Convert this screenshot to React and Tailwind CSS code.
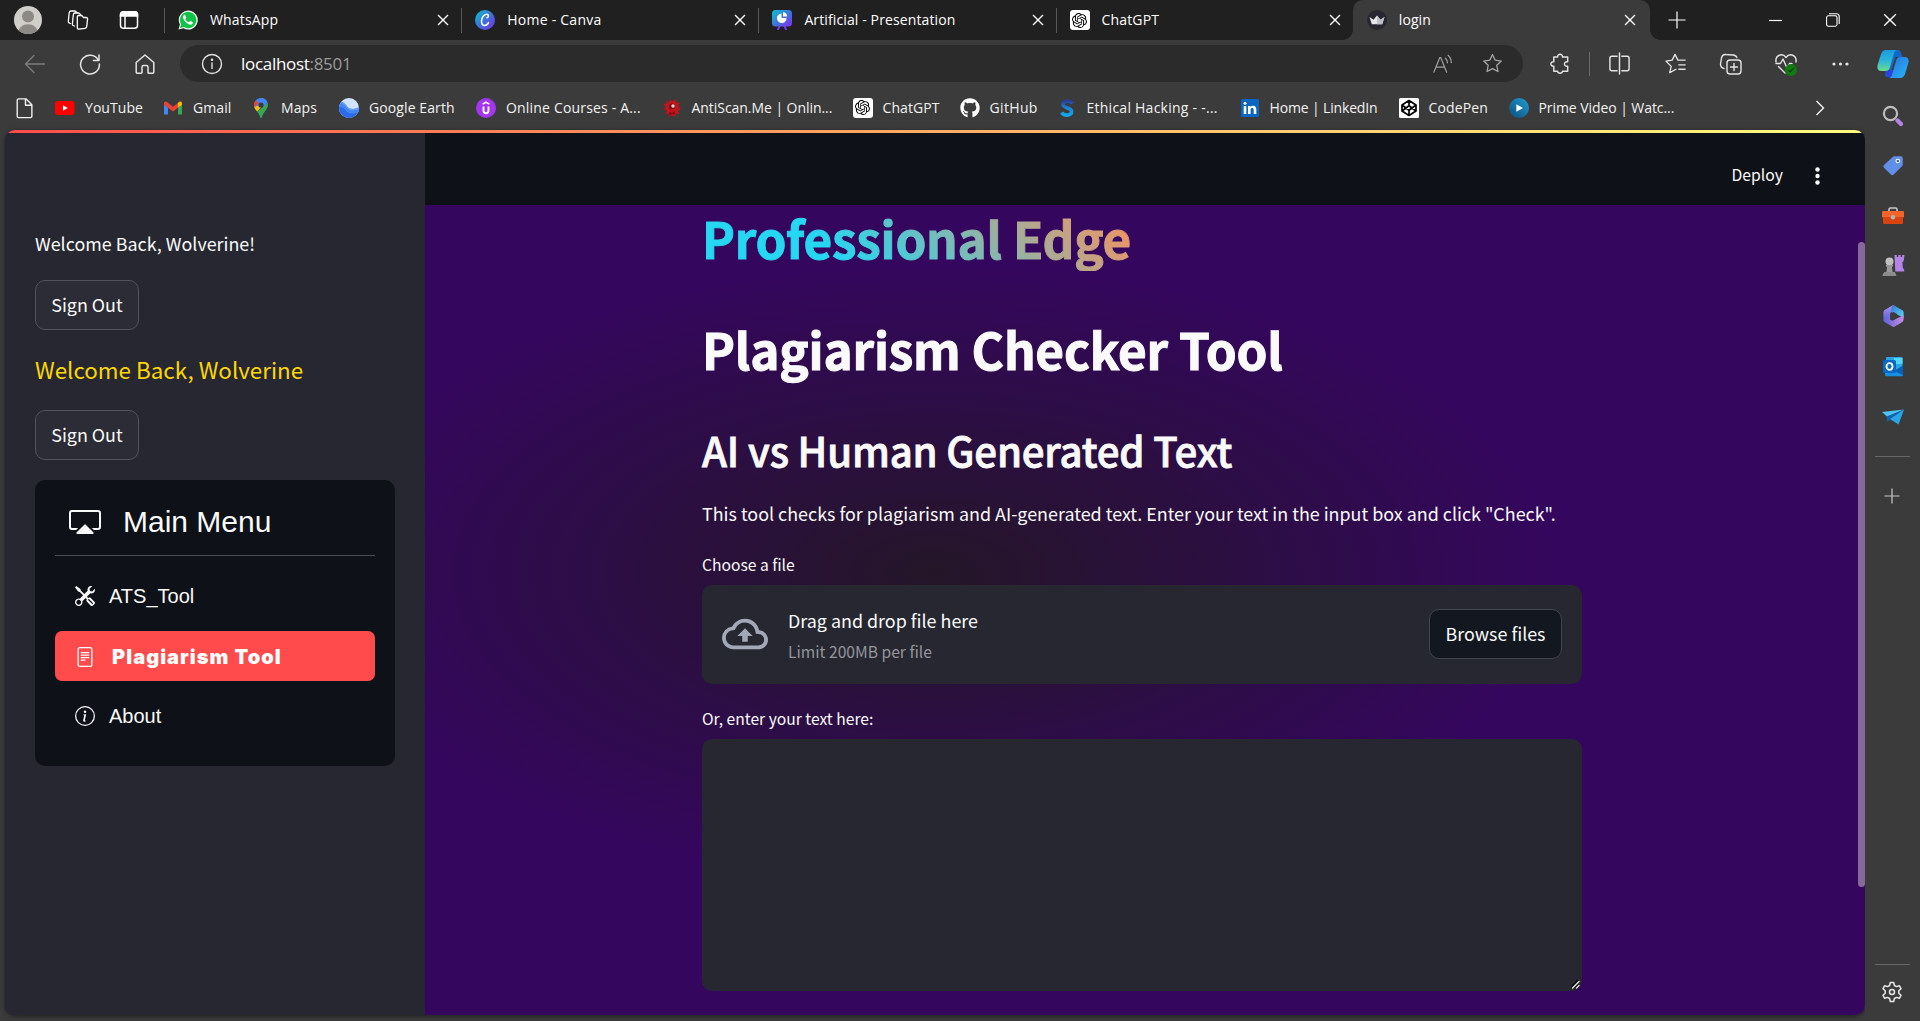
import React from "react";
import { BsCast, BsTools, BsFileText, BsInfoCircle } from "react-icons/bs";
import { FaGithub } from "react-icons/fa";
import { SiOpenai } from "react-icons/si";
import { MdOutlineCloudUpload } from "react-icons/md";

/* ---------- small line icons of the browser chrome ---------- */

const Line = ({ size = 24, w = 1.3, className = "", children }) => (
  <svg width={size} height={size} viewBox="0 0 24 24" fill="none" stroke="currentColor" strokeWidth={w} strokeLinecap="round" strokeLinejoin="round" className={`shrink-0 ${className}`}>
    {children}
  </svg>
);

const CloseX = ({ size = 12, w = 1.4 }) => (
  <svg width={size} height={size} viewBox="0 0 12 12" stroke="currentColor" strokeWidth={w} className="shrink-0">
    <path d="M1 1L11 11M11 1L1 11" />
  </svg>
);

const Star = ({ size = 24 }) => (
  <Line size={size}>
    <path d="M12 2.6l2.8 6 6.4.8-4.7 4.5 1.2 6.5-5.7-3.1-5.7 3.1 1.2-6.5L2.8 9.4l6.4-.8z" />
  </Line>
);

/* ---------- favicons ---------- */

const WhatsApp = () => (
  <svg width="20" height="20" viewBox="0 0 20 20">
    <path d="M.5 19.6l1.4-5A9.5 9.5 0 1 1 5.500 18.300z" fill="#f3fdf5" />
    <path d="M2 18.100l1.100-3.900A8.200 8.200 0 1 1 6 17.100z" fill="#10c245" />
    <path d="M7.300 5.300c-.3-.5-.6-.5-1-.4C5.300 5.500 5 6.400 5.100 7.500c.4 2.900 3.500 6.200 6.700 7.100 1.300.4 2.600-.2 3-1.400.2-.8.1-.9-.4-1.200l-1.800-.9c-.4-.2-.6-.1-.9.3-.7.9-.8 1-1.300.7C8.700 11.400 7.700 10 7.300 9.200c-.2-.4.9-1 .9-1.700z" fill="#fff" />
  </svg>
);

const Canva = () => (
  <svg width="20" height="20" viewBox="0 0 20 20">
    <defs>
      <linearGradient id="cv" x1="0" y1="0" x2="1" y2="1">
        <stop offset="0" stopColor="#08c7cf" />
        <stop offset="0.5" stopColor="#3b72d9" />
        <stop offset="1" stopColor="#7d2ae8" />
      </linearGradient>
    </defs>
    <circle cx="10" cy="10" r="10" fill="url(#cv)" />
    <path d="M12 7.800c1.900-.4 1.900-3.600-.3-3.600-2.800 0-5.200 3.700-5.200 7 0 2.600 1.300 4.200 3.100 4.200 1.700 0 3-1.100 3.900-2.800" fill="none" stroke="#fff" strokeWidth="1.500" strokeLinecap="round" />
  </svg>
);

const CanvaPresentation = () => (
  <svg width="20" height="20" viewBox="0 0 20 20">
    <defs>
      <linearGradient id="cp" x1="0" y1="0" x2="1" y2="1">
        <stop offset="0" stopColor="#08c7cf" />
        <stop offset="0.5" stopColor="#3a78dd" />
        <stop offset="1" stopColor="#8a2af0" />
      </linearGradient>
    </defs>
    <path d="M7.500 16L6 19.500M12.500 16L14 19.500" stroke="#6f3be6" strokeWidth="2" strokeLinecap="round" />
    <rect x="0" y="0" width="20" height="16.500" rx="3.500" fill="url(#cp)" />
    <path d="M9.500 3.500V8h5a4.800 4.800 0 1 1-5-4.500z" fill="#fff" />
    <path d="M11 2.200a4.600 4.600 0 0 1 4.300 4.300H11z" fill="#fff" />
  </svg>
);

const ChatGpt = () => (
  <span className="flex size-5 items-center justify-center rounded-[3px] bg-white text-black">
    <SiOpenai size={15} />
  </span>
);

const Crown = () => (
  <svg width="20" height="20" viewBox="0 0 20 20">
    <circle cx="10" cy="10" r="10" fill="#262730" />
    <path d="M2.500 7l4 2.800L10 5.500l3.500 4.300 4-2.800-2.300 7.300H4.800z" fill="#e6e6ea" />
    <path d="M10 5.500l3.500 4.300 4-2.800-2.300 7.300H10z" fill="#bfc0c6" />
  </svg>
);

const YouTube = () => (
  <svg width="20" height="20" viewBox="0 0 20 20">
    <rect y="3" width="19.500" height="14" rx="3.200" fill="#f00" />
    <path d="M8 7.200v5.600l4.800-2.800z" fill="#fff" />
  </svg>
);

const Gmail = () => (
  <svg width="20" height="20" viewBox="0 0 20 20">
    <path d="M1 5.500V16.500h4V9.800z" fill="#4285f4" />
    <path d="M19 5.500V16.500h-4V9.800z" fill="#34a853" />
    <path d="M1 6.800V5.500C1 3.900 2.500 3 3.800 3.900L10 8.700l6.200-4.800L15 9.800l-5 3.800-5-3.800z" fill="#ea4335" />
    <path d="M15 4.800l1.200-.9C17.500 3 19 3.900 19 5.500v1.300L15 9.800z" fill="#fbbc04" />
  </svg>
);

const Maps = () => (
  <svg width="20" height="20" viewBox="0 0 20 20">
    <path d="M10 0a7 7 0 0 0-7 7c0 2.200.9 3.800 2 5.200L14.500 1.700A7 7 0 0 0 10 0z" fill="#4285f4" />
    <path d="M4.700 2.500A7 7 0 0 0 3 7c0 .8.100 1.500.3 2.100L8 5z" fill="#ea4335" />
    <path d="M3.300 9C4 11 5.200 12.300 6.300 13.700L13 5.500z" fill="#fbbc04" />
    <path d="M16.500 4.300C18 8.500 15.500 11.500 13 14.700c-1.500 2-1.800 3.600-2.400 5-.3.500-.9.500-1.200 0-.6-1.600-1.200-3.500-3.100-6z" fill="#34a853" />
    <path d="M10 0a7 7 0 0 1 6.500 4.300L12 9.500 8 5z" fill="#4285f4" />
    <circle cx="10" cy="7" r="2.600" fill="#3b3b3b" />
  </svg>
);

const Earth = () => (
  <svg width="20" height="20" viewBox="0 0 20 20">
    <defs>
      <clipPath id="ec"><circle cx="10" cy="10" r="10" /></clipPath>
    </defs>
    <g clipPath="url(#ec)">
      <rect width="20" height="20" fill="#d2e3fc" />
      <path d="M0 4c4-1 6 1 8 4s6 4 12 1v11H0z" fill="#669df6" />
      <path d="M0 9c3-1 5 1 7 3.500s7 4 13 1.500v6H0z" fill="#2b6de8" />
      <path d="M0 6c3-1.500 5.500.5 7.500 3.500S14 13.500 20 11v3c-6 2-10 1-13-2S3 8 0 9z" fill="#4285f4" />
    </g>
  </svg>
);

const Udemy = () => (
  <svg width="20" height="20" viewBox="0 0 20 20">
    <circle cx="10" cy="10" r="10" fill="#a435f0" />
    <path d="M6.600 6.100L10 4.200l3.400 1.900" fill="none" stroke="#fff" strokeWidth="1.600" />
    <path d="M7.500 8.400v4.200c0 3.600 5 3.600 5 0V8.400" fill="none" stroke="#fff" strokeWidth="1.900" />
  </svg>
);

const AntiScan = () => (
  <svg width="20" height="20" viewBox="0 0 20 20">
    <path d="M4 3l3 1.500L8 1.500l2.500 2L13.500 1l.7 3.300 3.600.7-1.500 3.300 2.500 2-2.700 2.400 1.200 3.300-3.300-.3-.5 3.300L10 17l-3.500 2.500.3-4-3.500.5 1.700-3.500L1.500 11l2.600-2L1.500 6 4.500 6z" fill="#c3141b" />
    <path d="M7 14l3 1 3-2-.5 4-2.500-1.500L7.500 18z" fill="#7d0d12" />
    <circle cx="10" cy="8.500" r="3" fill="#7a1216" />
    <circle cx="11" cy="8" r="1.700" fill="#e9d6d6" />
  </svg>
);

const Sololearn = () => (
  <svg width="20" height="20" viewBox="0 0 20 20">
    <defs>
      <linearGradient id="sl" x1="0" y1="0" x2="0" y2="1">
        <stop offset="0" stopColor="#2b3fa0" />
        <stop offset="0.500" stopColor="#1789d4" />
        <stop offset="1" stopColor="#10a8e8" />
      </linearGradient>
    </defs>
    <path d="M15.500 5.600C13.500 2.500 6.200 2.300 6 6.400c-.1 4 8.600 2.800 8.600 7.200 0 4.600-7.800 4.400-10 1" fill="none" stroke="url(#sl)" strokeWidth="3.600" />
  </svg>
);

const LinkedIn = () => (
  <svg width="20" height="20" viewBox="0 0 20 20">
    <rect x="1" y="1" width="18" height="18" rx="1.500" fill="#0a66c2" />
    <path d="M3.700 8h2.600v8H3.700zM8 8h2.500v1.100c1.200-2 5.800-2 5.800 2.200V16h-2.600v-4.100c0-2.500-3.100-2.300-3.100 0V16H8z" fill="#fff" />
    <circle cx="5" cy="5.300" r="1.500" fill="#fff" />
  </svg>
);

const CodePen = () => (
  <svg width="20" height="20" viewBox="0 0 20 20">
    <rect width="20" height="20" rx="1.500" fill="#fff" />
    <path d="M10 2.500l7 4.500v6l-7 4.500L3 13V7zM10 2.500V7.500M10 12.500v5M3 7l7 5.200L17 7M3 13l7-5.200 7 5.200" fill="none" stroke="#000" strokeWidth="1.700" strokeLinejoin="round" />
  </svg>
);

const PrimeVideo = () => (
  <svg width="20" height="20" viewBox="0 0 20 20">
    <defs>
      <linearGradient id="pv" x1="0" y1="1" x2="1" y2="0">
        <stop offset="0" stopColor="#0e4a7c" />
        <stop offset="1" stopColor="#1fa0d4" />
      </linearGradient>
    </defs>
    <circle cx="10" cy="10" r="10" fill="url(#pv)" />
    <path d="M7.400 6.200v7.600L14 10z" fill="#fff" />
  </svg>
);

/* ---------- tab strip ---------- */

const tabs = [
  { label: "WhatsApp", icon: <WhatsApp />, track: "tracking-[0.15px]" },
  { label: "Home - Canva", icon: <Canva />, track: "tracking-[0.25px]" },
  { label: "Artificial - Presentation", icon: <CanvaPresentation />, track: "tracking-[0.12px]" },
  { label: "ChatGPT", icon: <ChatGpt />, track: "tracking-[0.15px]" },
  { label: "login", icon: <Crown />, track: "tracking-[0.1px]", active: true },
];

const Tab = ({ label, icon, active, track }) => (
  <div className={`relative flex h-10 w-[297.200px] shrink-0 items-center pl-[14px] ${active ? "rounded-t-[10px] bg-[#3b3b3b] pr-[14px]" : "pr-3"}`}>
    {!active && <span className="absolute left-0 top-2 h-[25px] w-px bg-[#5a5a5a]" />}
    {active && (
      <>
        <span className="absolute -left-[10px] bottom-0 size-[10px] bg-[radial-gradient(circle_at_0_0,#202020_9.500px,#3b3b3b_10px)]" />
        <span className="absolute -right-[10px] bottom-0 size-[10px] bg-[radial-gradient(circle_at_100%_0,#202020_9.500px,#3b3b3b_10px)]" />
      </>
    )}
    {icon}
    <span className={`ml-3 grow whitespace-nowrap text-[14px] leading-5 ${track}`}>{label}</span>
    <CloseX />
  </div>
);

const TabStrip = () => (
  <div className="flex h-10 items-center bg-[#202020] text-white">
    <div className="flex h-10 w-[164px] shrink-0 items-center">
      <svg width="28" height="28" viewBox="0 0 28 28" className="ml-[14px]">
        <defs><clipPath id="av"><circle cx="14" cy="14" r="14" /></clipPath></defs>
        <g clipPath="url(#av)">
          <rect width="28" height="28" fill="#d0cec9" />
          <circle cx="14" cy="10.500" r="6" fill="#8d8a86" />
          <path d="M4 28c0-13 20-13 20 0z" fill="#8d8a86" />
        </g>
      </svg>
      <Line size={24} w={1.300} className="ml-6">
        <path d="M12.500 7.500h3.200l1.800 2h2.700c.9 0 1.500.7 1.400 1.500l-.9 7.700c-.1.900-.8 1.600-1.700 1.700l-6 .8c-1 .1-1.700-.6-1.700-1.600V9c0-.8.5-1.500 1.200-1.500z" />
        <path d="M8.500 18l-1-.3c-.8-.2-1.200-.9-1.100-1.700l.9-9.300c.1-1 .8-1.700 1.800-1.700h3.700l2 1.700M4.500 15.500l-1-.4c-.9-.3-1.300-1-1.200-1.900L3.200 4.700c.1-1 .9-1.700 1.900-1.700h4l1.700 1.500" />
      </Line>
      <svg width="20" height="20" viewBox="0 0 20 20" className="ml-[29px]" fill="none" stroke="#fff" strokeWidth="1.500">
        <rect x="1.500" y="1.800" width="17" height="16.400" rx="3" />
        <path d="M1.500 6V4.500a2.700 2.700 0 0 1 2.700-2.700h11.600a2.700 2.700 0 0 1 2.700 2.700V6z" fill="#fff" />
        <path d="M6 6v12" />
      </svg>
    </div>
    {tabs.map((t) => <Tab key={t.label} {...t} />)}
    <div className="flex grow items-center pl-[18px]">
      <svg width="18" height="18" viewBox="0 0 18 18" stroke="#fff" strokeWidth="1.200"><path d="M9 0.500v17M.5 9h17" /></svg>
      <svg width="13" height="13" viewBox="0 0 13 13" stroke="#fff" strokeWidth="1.200" className="ml-[83px]"><path d="M0 6.500h13" /></svg>
      <svg width="14" height="14" viewBox="0 0 14 14" fill="none" stroke="#fff" strokeWidth="1.100" className="ml-[44px]">
        <rect x=".6" y="2.800" width="10.400" height="10.400" rx="1.600" />
        <path d="M3 .7h7.500a2.700 2.700 0 0 1 2.700 2.700V11" />
      </svg>
      <span className="ml-[43px]"><CloseX size={14} w={1.200} /></span>
    </div>
  </div>
);

/* ---------- address bar ---------- */

const Copilot = () => (
  <svg width="32" height="28" viewBox="0 0 32 28">
    <defs>
      <linearGradient id="k1" x1="0" y1="0" x2="0" y2="1">
        <stop offset="0" stopColor="#1a9be0" /><stop offset="0.500" stopColor="#2cb5d8" /><stop offset="1" stopColor="#6ddc8b" />
      </linearGradient>
      <linearGradient id="k2" x1="0" y1="0" x2="1" y2="1">
        <stop offset="0" stopColor="#2a6fe0" /><stop offset="1" stopColor="#25b8f5" />
      </linearGradient>
    </defs>
    <path d="M13 0h8c2 0 2.500 1.500 3 3l1.500 4h-7L13 24c-1.500 4-3 4-5 1z" fill="#1268c8" />
    <path d="M9 20h8l-2.500 7.500h-2c-2 0-2.500-1-3-3z" fill="#2a41dd" />
    <path d="M9 0h11c-2 .5-2.600 2-3.200 4L13 17c-.7 2.500-2 4-4.500 4H4.500C1 21-.2 18.500.6 15L4 4C5 1.500 6.500 0 9 0z" fill="url(#k1)" />
    <path d="M23 28H12c2-.5 2.600-2 3.200-4L19 11c.7-2.500 2-4 4.500-4h4c3.500 0 4.700 2.500 3.900 6L28 24c-1 2.500-2.500 4-5 4z" fill="url(#k2)" />
  </svg>
);

const Cell = ({ className, children }) => <div className={`flex shrink-0 items-center justify-center ${className}`}>{children}</div>;

const AddressRow = () => (
  <div className="flex h-[47px] items-center bg-[#3b3b3b] text-[#e4e4e4]">
    <div className="flex w-[180px] shrink-0 items-center pl-[7px]">
      <Cell className="w-[55px] text-[#7d7d7d]"><Line size={24}><path d="M21.500 12H2.500M11 3.500L2.500 12l8.500 8.500" /></Line></Cell>
      <Cell className="w-[55px]"><Line size={24} w={1.500}><path d="M20.500 8.500A9.400 9.400 0 1 0 21.400 12M21 3v5.500h-5.500" /></Line></Cell>
      <Cell className="w-[55px]"><Line size={24} w={1.500}><path d="M3.200 10.500L12 3l8.800 7.500V20a1.200 1.200 0 0 1-1.200 1.200h-3.800a.8.800 0 0 1-.8-.8V15a1.500 1.500 0 0 0-1.500-1.500h-3A1.500 1.500 0 0 0 9 15v5.400a.8.800 0 0 1-.8.8H4.400A1.200 1.200 0 0 1 3.200 20z" /></Line></Cell>
    </div>
    <div className="flex h-[37px] w-[1343px] shrink-0 items-center rounded-full bg-[#2b2b2b] pl-5">
      <Line size={24} w={1.400}><circle cx="12" cy="12" r="9.500" /><path d="M12 11v5.500" /><circle cx="12" cy="7.800" r=".6" fill="currentColor" /></Line>
      <span className="ml-[17px] grow text-[17px] leading-6 tracking-[-0.3px] text-white">localhost<span className="text-[#9b9b9b]">:8501</span></span>
      <Cell className="w-12 text-[#a0a0a0]">
        <Line size={22}><path d="M2 21L8.500 5h1L16 21M4.500 15.500h9M14.500 5.500a7 7 0 0 1 2.300 5.200M17.500 2.500a10.500 10.500 0 0 1 3.500 8" /></Line>
      </Cell>
      <Cell className="mr-[6px] w-[50px] text-[#a9a9a9]"><Star size={23} /></Cell>
    </div>
    <Cell className="ml-[9px] w-14">
      <Line size={23} w={1.500}><path d="M9 5.200C8.500 1.500 14.500 1.500 14 5.200h5.500v5c-4.500-.8-4.500 5.400 0 4.600V20H14c.5 2.800-5.500 2.800-5 0H5v-5.200c-4 .6-4-5.200 0-4.600v-5z" /></Line>
    </Cell>
    <div className="ml-[1px] h-6 w-px bg-[#686868]" />
    <Cell className="w-[58px]">
      <Line size={23} w={1.500}><path d="M9.500 4.500H4a2 2 0 0 0-2 2v11a2 2 0 0 0 2 2h5.500M14.500 4.500H20a2 2 0 0 1 2 2v11a2 2 0 0 1-2 2h-5.500M12 1v22" /></Line>
    </Cell>
    <Cell className="w-[55px]">
      <Line size={23} w={1.400}><path d="M12.500 18l-6.500 3.500L7.500 15 2 9.500l6.500-1L11.500 2.500l3 6H22M15.500 13.500H22M15.500 18H22" /></Line>
    </Cell>
    <Cell className="w-[55px]">
      <Line size={24} w={1.400}><rect x="8" y="8" width="14" height="14" rx="3" /><path d="M15 11.500v7M11.500 15h7M5 16.500C2.500 16 1.500 14 1.500 12L2.500 6c.5-2.500 2-3.800 4.500-3.500l7 .5c2 .2 3.300 1 3.800 2.500" /></Line>
    </Cell>
    <Cell className="relative w-[56px]">
      <Line size={24} w={1.400}><path d="M2 10C1 3 8.500.5 12 5.500 15.500.5 23 3 22 10M4.500 14.500L11 21M2 11.500h4.500L9 7l4 9 2.500-4.500H18" /></Line>
      <svg width="12" height="12" viewBox="0 0 12 12" className="absolute left-[27px] top-[12px]"><circle cx="6" cy="6" r="6" fill="#107c10" /><path d="M3.300 6.200L5.200 8l3.500-4" fill="none" stroke="#0a3d0a" strokeWidth="1.200" /></svg>
    </Cell>
    <Cell className="w-[52px]">
      <svg width="17" height="4" viewBox="0 0 17 4" fill="#e4e4e4"><circle cx="2" cy="2" r="1.600" /><circle cx="8.500" cy="2" r="1.600" /><circle cx="15" cy="2" r="1.600" /></svg>
    </Cell>
    <Cell className="w-[54px]"><Copilot /></Cell>
  </div>
);

/* ---------- bookmarks ---------- */

const bookmarks = [
  { label: "YouTube", icon: <YouTube />, w: "w-[108px]", t: "tracking-[0.05px]" },
  { label: "Gmail", icon: <Gmail />, w: "w-[88px]", t: "tracking-[0.1px]" },
  { label: "Maps", icon: <Maps />, w: "w-[88px]", t: "tracking-[0.1px]" },
  { label: "Google Earth", icon: <Earth />, w: "w-[137px]", t: "tracking-[0.1px]" },
  { label: "Online Courses - A...", icon: <Udemy />, w: "w-[185.500px]", t: "tracking-[0.18px]" },
  { label: "AntiScan.Me | Onlin...", icon: <AntiScan />, w: "w-[191px]", t: "tracking-[-0.05px]" },
  { label: "ChatGPT", icon: <ChatGpt />, w: "w-[107px]", t: "tracking-[0.1px]" },
  { label: "GitHub", icon: <FaGithub size={20} color="#fff" />, w: "w-[97px]", t: "tracking-[0.35px]" },
  { label: "Ethical Hacking - -...", icon: <Sololearn />, w: "w-[183px]", t: "tracking-[0.25px]" },
  { label: "Home | LinkedIn", icon: <LinkedIn />, w: "w-[159px]", t: "tracking-[-0.15px]" },
  { label: "CodePen", icon: <CodePen />, w: "w-[110px]", t: "tracking-[0.15px]" },
  { label: "Prime Video | Watc...", icon: <PrimeVideo />, w: "w-[302px]", t: "tracking-[-0.07px]" },
];

const BookmarkBar = () => (
  <div className="flex h-[43px] items-center bg-[#3b3b3b] pb-[2px] pl-[15px] text-[#f2f2f2]">
    <div className="w-10 shrink-0">
      <Line size={22} w={1.500} className="-ml-px"><path d="M5 2h8l6.500 6.500V21a1.500 1.500 0 0 1-1.500 1.500H5A1.500 1.500 0 0 1 3.500 21V3.500A1.500 1.500 0 0 1 5 2zM12.500 2.500V9h6.500" /></Line>
    </div>
    {bookmarks.map(({ label, icon, w, t }) => (
      <div key={label} className={`flex shrink-0 items-center gap-[10px] ${w}`}>
        {icon}
        <span className={`whitespace-nowrap text-[14px] leading-5 ${t}`}>{label}</span>
      </div>
    ))}
    <svg width="10" height="16" viewBox="0 0 10 16" fill="none" stroke="#f2f2f2" strokeWidth="1.400" className="ml-1"><path d="M1.500 1l7 7-7 7" /></svg>
  </div>
);

/* ---------- app sidebar ---------- */

const SignOut = ({ className = "" }) => (
  <button className={`flex h-[50px] w-[104px] items-center justify-center rounded-[10px] border border-[#52535b] bg-[#2b2c36] pb-[2px] text-[17.9px] leading-[30px] ${className}`}>Sign Out</button>
);

const Sidebar = () => (
  <aside className="flex w-[420px] shrink-0 flex-col bg-[#262730] px-[30px] pt-[95px] text-[#fafafa]">
    <p className="text-[17.9px] leading-[30px] whitespace-nowrap">Welcome Back, Wolverine!</p>
    <SignOut className="mt-[22px]" />
    <p className="mt-6 text-[22.4px] leading-[30px] whitespace-nowrap text-[#ffd700]">Welcome Back, Wolverine</p>
    <SignOut className="mt-[26px]" />
    <nav className="mt-5 h-[286px] rounded-[10px] bg-[#0e1117] p-5 font-['Liberation_Sans',Arial,sans-serif] text-[20px] text-[#fafafa]">
      <div className="flex h-[56px] items-start border-b border-[#4a4c51] pl-[14px]">
        <BsCast size={32} className="mt-[6px]" />
        <span className="mt-[4px] ml-[22px] text-[30px] leading-9">Main Menu</span>
      </div>
      <div className="mt-[15px] flex h-[50px] items-center pl-5">
        <BsTools size={20} />
        <span className="ml-[14px]">ATS_Tool</span>
      </div>
      <div className="mt-[10px] flex h-[50px] items-center rounded-[7px] bg-[#ff4b4b] pl-5 text-white">
        <BsFileText size={20} className="mt-[2px]" />
        <span className="mt-px ml-[17px] font-['Inter',sans-serif] font-black tracking-[1.05px]">Plagiarism Tool</span>
      </div>
      <div className="mt-[10px] flex h-[50px] items-center pl-5">
        <BsInfoCircle size={20} />
        <span className="ml-[14px]">About</span>
      </div>
    </nav>
  </aside>
);

/* ---------- main pane ---------- */

const Main = () => (
  <main className="flex grow flex-col text-[#fafafa]">
    <header className="flex h-[72px] items-center justify-end bg-[#0e1117] pr-[45px]">
      <span className="mt-[12px] text-[15.75px] leading-6">Deploy</span>
      <svg width="5" height="18" viewBox="0 0 5 18" fill="#fafafa" className="mt-[13px] ml-[32px]"><circle cx="2.500" cy="2.500" r="2.200" /><circle cx="2.500" cy="9" r="2.200" /><circle cx="2.500" cy="15.500" r="2.200" /></svg>
    </header>
    <div className="relative grow">
      <div className="ml-[277px] flex w-[880px] flex-col items-start">
        <h1 className="h-[66px] bg-[linear-gradient(45deg,#26d7f2_30%,#ff8f5a)] bg-clip-text text-[49.5px] leading-[66px] font-bold tracking-[-0.25px] whitespace-nowrap text-transparent [-webkit-text-stroke:1px_transparent]">Professional Edge</h1>
        <h1 className="mt-[45px] text-[49.5px] leading-[66px] font-bold tracking-[-0.2px] whitespace-nowrap [-webkit-text-stroke:1px_#fafafa]">Plagiarism Checker Tool</h1>
        <h2 className="mt-[41px] text-[40.2px] leading-[54px] font-medium tracking-[-0.18px] whitespace-nowrap [-webkit-text-stroke:0.8px_#fafafa]">AI vs Human Generated Text</h2>
        <p className="mt-[21px] text-[17.9px] leading-[30px] whitespace-nowrap">This tool checks for plagiarism and AI-generated text. Enter your text in the input box and click "Check".</p>
        <label className="mt-[24px] text-[15.65px] leading-[26px]">Choose a file</label>
        <section className="mt-[7px] flex h-[99px] w-full items-center rounded-[10px] bg-[#262730] px-5">
          <MdOutlineCloudUpload size={46} color="#a3a8b8" className="-mt-[2px]" />
          <div className="ml-5 flex grow flex-col">
            <span className="text-[17.9px] leading-[30px]">Drag and drop file here</span>
            <span className="mt-[2px] -mb-[2px] text-[15.65px] leading-[30px] text-[#94959b]">Limit 200MB per file</span>
          </div>
          <button className="-mt-px h-[50px] w-[133px] rounded-[10px] border border-[#41444c] bg-[#131720] pb-[2px] text-[17.9px] leading-[30px]">Browse files</button>
        </section>
        <label className="mt-[22px] text-[15.65px] leading-[26px]">Or, enter your text here:</label>
        <div className="mt-[7px] flex h-[252px] w-full items-end justify-end rounded-[10px] bg-[#262730] p-[2px]">
          <svg width="9" height="9" viewBox="0 0 9 9" strokeWidth="1.300"><path d="M0 8L8 0M4.500 8.500L8.500 4.500" stroke="#0b0b0d" strokeWidth="2.600" /><path d="M1 8.500L8.500 1M5 8.500L8.500 5" stroke="#e8e8e8" /></svg>
        </div>
      </div>
      <div className="absolute top-[37px] right-0 h-[645px] w-[7px] rounded-full bg-[#86689c]" />
    </div>
  </main>
);

/* ---------- browser side rail ---------- */

const rail = [
  <svg key="search" width="22" height="22" viewBox="0 0 22 22"><circle cx="8.500" cy="8.500" r="6.600" fill="none" stroke="#bdbdbd" strokeWidth="2.200" /><path d="M15.500 15.500l3.500 3.500" stroke="#b384e6" strokeWidth="4.200" strokeLinecap="round" /></svg>,
  <svg key="tag" width="22" height="22" viewBox="0 0 22 22"><path d="M12.500 1.200h6.300a2 2 0 0 1 2 2v6.300a2.500 2.500 0 0 1-.8 1.800l-8.300 8.300a2 2 0 0 1-2.900 0L2 12.800a2 2 0 0 1 0-2.900L10.700 2a2.500 2.500 0 0 1 1.800-.8z" fill="#5f8fe6" /><circle cx="15.800" cy="6" r="2.300" fill="#fff" /><circle cx="15.800" cy="6" r="1.200" fill="#2e5ab8" /></svg>,
  <svg key="tools" width="22" height="22" viewBox="0 0 22 22"><path d="M7 7V4.500c0-1 .5-1.500 1.500-1.500h5c1 0 1.500.5 1.500 1.500V7" fill="none" stroke="#c9c9c9" strokeWidth="1.600" /><rect x="0" y="6" width="22" height="6.500" rx="1.200" fill="#f0662a" /><path d="M1 12h20v5.500a1.500 1.500 0 0 1-1.500 1.500h-17A1.500 1.500 0 0 1 1 17.500z" fill="#d9430f" /><circle cx="11" cy="12.300" r="2.200" fill="#b5b5b5" /></svg>,
  <svg key="chess" width="23" height="24" viewBox="0 0 23 24"><path d="M12.500 1h2.300v2h1.500V1h2.400v2h1.500V1h2.300l-.8 6-1.300 1.200.4 5.200 1.400 2.600v1.500h-8.900z" fill="#b684e6" /><circle cx="7.500" cy="7.500" r="4" fill="#c0c0c0" /><path d="M3.500 11h8l-1.500 2.500.7 5h-6.400l.7-5z" fill="#989898" /><path d="M2.500 18h10c1 1 1.800 2.500 1.800 4H.5c0-1.500.8-3 2-4z" fill="#8c8c8c" /></svg>,
  <svg key="m365" width="21" height="22" viewBox="0 0 21 22"><defs><linearGradient id="ma" x1="0" y1="0" x2="0" y2="1"><stop offset="0" stopColor="#b98cf0" /><stop offset="1" stopColor="#4a63dc" /></linearGradient><linearGradient id="mb" x1="0" y1="0" x2="1" y2="0"><stop offset="0" stopColor="#5f62d8" /><stop offset="1" stopColor="#c58ae0" /></linearGradient><linearGradient id="mc" x1="0" y1="0" x2="1" y2="1"><stop offset="0" stopColor="#2f77d8" /><stop offset="1" stopColor="#5fd6f5" /></linearGradient></defs><path d="M9.500.6L2 4.800C.9 5.500.4 6.400.4 7.600v8.200l6.800-3V8l7-5.400L11.500.8c-.7-.4-1.300-.4-2-.2z" fill="url(#ma)" /><path d="M9 .9c.9-.5 1.700-.5 2.600 0L19 5c1 .6 1.600 1.500 1.600 2.700v5L14 9.500 7.600 7z" fill="url(#mc)" /><path d="M.4 15c.1 1 .6 1.700 1.600 2.300l7.200 4.200c.9.5 1.700.5 2.600 0L19 17.300c1-.6 1.600-1.500 1.600-2.700v-4L14.500 13l-5 2.800-2.300-1V10.500z" fill="url(#mb)" /><path d="M7.800 8.500L10.500 7l3.500 2v4l-3.500 2-3-1.500z" fill="#3b3b3b" /></svg>,
  <svg key="outlook" width="22" height="22" viewBox="0 0 22 22"><path d="M5 1h14.500c.5 0 1 .5 1 1v13H4V2c0-.5.500-1 1-1z" fill="#28a8ea" /><path d="M12 2h8.500v6H12z" fill="#50d9ff" /><path d="M3 12l9 3 9-5v9c0 .8-.5 1.200-1.200 1.200H4.200C3.500 20.200 3 19.800 3 19z" fill="#1490df" /><path d="M12 15l9-5.500V19z" fill="#0a5fb4" /><rect x="1" y="4" width="13" height="13" rx="1.500" fill="#0669c4" /><ellipse cx="7.500" cy="10.500" rx="3" ry="3.300" fill="none" stroke="#fff" strokeWidth="1.800" /></svg>,
  <svg key="send" width="22" height="18" viewBox="0 0 22 18"><path d="M0 4L22 1.500 5.500 9z" fill="#4dc4f5" /><path d="M4.500 8.500L22 1.500 7 12.500 5.500 14z" fill="#0c63b0" /><path d="M22 1.500L16.500 16.500 8 11z" fill="#2aa4e8" /></svg>,
];

const Rail = () => (
  <aside className="flex w-[55px] shrink-0 flex-col items-center bg-[#3b3b3b]">
    <div className="-mt-[39.500px] flex flex-col">
      {rail.map((icon) => <div key={icon.key} className="flex h-[50.200px] w-[55px] items-center justify-center pl-[1px]">{icon}</div>)}
    </div>
    <div className="mt-[14.500px] h-px w-[35px] bg-[#666]" />
    <svg width="16" height="16" viewBox="0 0 16 16" stroke="#c8c8c8" strokeWidth="1.200" className="mt-[31px] mr-[2px]"><path d="M8 .5v15M.5 8h15" /></svg>
    <div className="mt-auto h-px w-[35px] bg-[#666]" />
    <Line size={24} w={1.500} className="mt-[15px] mr-[1px] mb-[17px] text-[#e8e8e8]">
      <path d="M10.300 2.500h3.400l.7 3 2 1.100 2.900-.9 1.700 3-2.200 2.100v2.400l2.200 2.100-1.700 3-2.900-.9-2 1.100-.7 3h-3.400l-.7-3-2-1.100-2.900.9-1.700-3 2.200-2.100v-2.400L3 8.700l1.700-3 2.900.9 2-1.100z" />
      <circle cx="12" cy="12" r="2.500" />
    </Line>
  </aside>
);

export default function App() {
  return (
    <div className="flex h-[1021px] w-[1920px] flex-col overflow-hidden bg-[#3b3b3b] font-['Open_Sans','Noto_Sans',sans-serif]">
      <TabStrip />
      <AddressRow />
      <BookmarkBar />
      <div className="flex grow pl-[5px]">
        <div className="flex h-[885px] w-[1860px] shrink-0 flex-col overflow-hidden rounded-[10px] bg-[radial-gradient(ellipse_630px_312px_at_50%_50%,#241628,#34065e)] font-['Noto_Sans_CJK_SC',sans-serif] shadow-[0_1px_4px_#00000080]">
          <div className="h-[3px] shrink-0 bg-linear-to-r from-[#ff4b4b] to-[#fffd80]" />
          <div className="flex grow">
            <Sidebar />
            <Main />
          </div>
        </div>
        <Rail />
      </div>
    </div>
  );
}
